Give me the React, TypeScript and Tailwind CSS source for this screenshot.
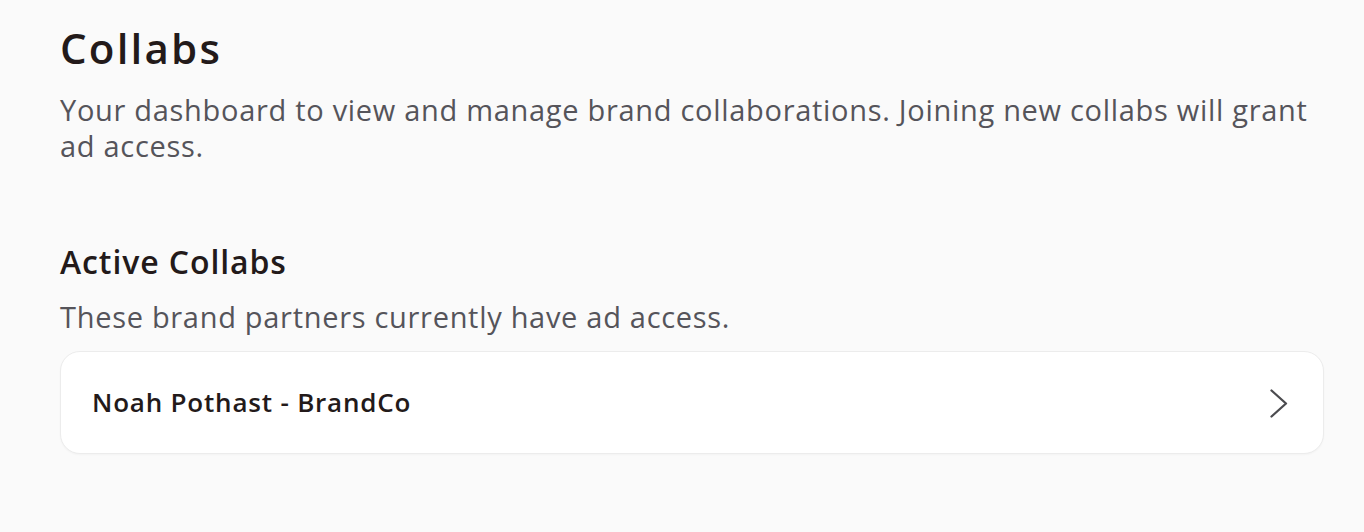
import React from 'react';

const font = { fontFamily: '"Open Sans", "Noto Sans", sans-serif' };

type Collab = { id: string; name: string };

const collabs: Collab[] = [{ id: 'noah-brandco', name: 'Noah Pothast - BrandCo' }];

function ChevronRight() {
  return (
    <svg width="20" height="30" viewBox="0 0 20 30" fill="none" className="text-[#4b4b4f]">
      <path d="M2.5 1.5 L17 14.5 L2.5 27.5" stroke="currentColor" strokeWidth="2.3" strokeLinecap="round" strokeLinejoin="round" />
    </svg>
  );
}

export default function App() {
  return (
    <div className="min-h-screen bg-[#fafafa]" style={font}>
      <div className="pl-[60px] pr-[40px] pt-[22px]">
        <h1 className="text-[42px] leading-[52px] font-semibold text-[#231a1a] tracking-[2.2px]">Collabs</h1>
        <p className="mt-[18px] text-[29px] leading-[36px] text-[#55545a] tracking-[0.7px]">
          Your dashboard to view and manage brand collaborations. Joining new collabs will grant ad access.
        </p>

        <h2 className="mt-[78px] text-[32px] leading-[40px] font-semibold text-[#231a1a] tracking-[0.9px]">Active Collabs</h2>
        <p className="mt-[17px] text-[29px] leading-[36px] text-[#55545a] tracking-[0.7px]">
          These brand partners currently have ad access.
        </p>

        <div className="mt-[16px] flex flex-col gap-3">
          {collabs.map(c => (
            <button
              key={c.id}
              className="flex h-[103px] items-center justify-between rounded-[20px] border border-[#ececec] bg-white pl-[31px] pr-[34px] text-left shadow-[0_1px_2px_rgba(0,0,0,0.03)]"
            >
              <span className="text-[26px] font-semibold text-[#231a1a] tracking-[0.8px]">{c.name}</span>
              <span className="pt-[2px]">
                <ChevronRight />
              </span>
            </button>
          ))}
        </div>
      </div>
    </div>
  );
}
